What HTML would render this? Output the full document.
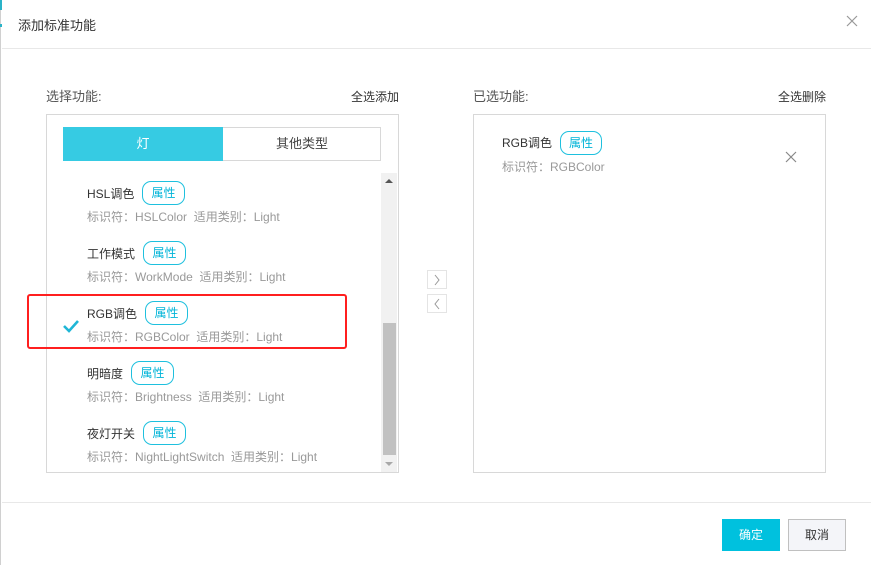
<!DOCTYPE html>
<html><head><meta charset="utf-8"><style>
*{margin:0;padding:0;box-sizing:border-box}
body{width:871px;height:565px;background:#fff;font-family:"Liberation Sans","Noto Sans CJK SC",sans-serif;position:relative;overflow:hidden;color:#333}
.a{position:absolute}
.t{font-size:12px;white-space:nowrap}
.pill{position:absolute;height:24px;border:1px solid #1ec0de;border-radius:9px;color:#00b4d8;font-size:12px;line-height:22px;text-align:center;width:43px}
.sub{color:#999;font-size:12px}
</style></head><body>
<div class="a" style="left:0;top:0;width:1px;height:565px;background:#d0d0d0"></div>
<div class="a" style="left:0;top:0;width:2px;height:10px;background:#2ab3c8"></div>
<div class="a" style="left:0;top:24px;width:2px;height:3px;background:#2ab3c8"></div>
<div class="a t" style="left:18px;top:15px;font-size:13px;color:#333">添加标准功能</div>
<svg class="a" style="left:846px;top:15px" width="12" height="12"><path d="M1 1L11 11M11 1L1 11" stroke="#999" stroke-width="1.2"/></svg>
<div class="a" style="left:2px;top:48px;width:869px;height:1px;background:#e8e8e8"></div>

<div class="a t" style="left:46px;top:86px;font-size:13px;color:#555">选择功能:</div>
<div class="a t" style="left:351px;top:88px;color:#333">全选添加</div>
<div class="a" style="left:46px;top:114px;width:353px;height:359px;border:1px solid #d8d8d8"></div>
<div class="a" style="left:63px;top:127px;width:318px;height:34px;border:1px solid #d8d8d8"></div>
<div class="a t" style="left:63px;top:127px;width:160px;height:34px;background:#36cbe3;color:#fff;line-height:34px;text-align:center;font-size:13px">灯</div>
<div class="a t" style="left:223px;top:127px;width:158px;height:34px;line-height:34px;text-align:center;font-size:13px;color:#444">其他类型</div>
<div class="a" style="left:381px;top:173px;width:16px;height:299px;background:#f1f1f1"></div>
<div class="a" style="left:383px;top:323px;width:13px;height:132px;background:#c1c1c1"></div>
<svg class="a" style="left:385px;top:178px" width="8" height="6"><path d="M0 5L4 1L8 5Z" fill="#555"/></svg>
<svg class="a" style="left:385px;top:461px" width="8" height="6"><path d="M0 1L8 1L4 5Z" fill="#a8a8a8"/></svg>

<div class="a t" style="left:87px;top:185px">HSL调色</div>
<div class="pill" style="left:142px;top:181px">属性</div>
<div class="a t sub" style="left:87px;top:208px">标识符：HSLColor &nbsp;适用类别：Light</div>
<div class="a t" style="left:87px;top:245px">工作模式</div>
<div class="pill" style="left:143px;top:241px">属性</div>
<div class="a t sub" style="left:87px;top:268px">标识符：WorkMode &nbsp;适用类别：Light</div>
<div class="a t" style="left:87px;top:305px">RGB调色</div>
<div class="pill" style="left:145px;top:301px">属性</div>
<div class="a t sub" style="left:87px;top:328px">标识符：RGBColor &nbsp;适用类别：Light</div>
<svg class="a" style="left:62px;top:319px" width="18" height="14"><path d="M2 7L7 12L16 2" stroke="#1fb6d6" stroke-width="2.6" fill="none"/></svg>
<div class="a" style="left:27px;top:294px;width:320px;height:55px;border:2.5px solid #ff1f1f;border-radius:3px"></div>
<div class="a t" style="left:87px;top:365px">明暗度</div>
<div class="pill" style="left:131px;top:361px">属性</div>
<div class="a t sub" style="left:87px;top:388px">标识符：Brightness &nbsp;适用类别：Light</div>
<div class="a t" style="left:87px;top:425px">夜灯开关</div>
<div class="pill" style="left:143px;top:421px">属性</div>
<div class="a t sub" style="left:87px;top:448px">标识符：NightLightSwitch &nbsp;适用类别：Light</div>

<div class="a" style="left:427px;top:270px;width:20px;height:19px;border:1px solid #e4e4e4"></div>
<svg class="a" style="left:433px;top:274px" width="8" height="12"><path d="M2 1L6 6L2 11" stroke="#999" fill="none"/></svg>
<div class="a" style="left:427px;top:294px;width:20px;height:19px;border:1px solid #e4e4e4"></div>
<svg class="a" style="left:433px;top:298px" width="8" height="12"><path d="M6 1L2 6L6 11" stroke="#999" fill="none"/></svg>

<div class="a t" style="left:473px;top:86px;font-size:13px;color:#555">已选功能:</div>
<div class="a t" style="left:778px;top:88px;color:#333">全选删除</div>
<div class="a" style="left:473px;top:114px;width:353px;height:359px;border:1px solid #d8d8d8"></div>
<div class="a t" style="left:502px;top:134px">RGB调色</div>
<div class="pill" style="left:560px;top:131px;width:42px">属性</div>
<div class="a t sub" style="left:502px;top:158px">标识符：RGBColor</div>
<svg class="a" style="left:785px;top:151px" width="12" height="12"><path d="M1 1L11 11M11 1L1 11" stroke="#888" stroke-width="1.2"/></svg>

<div class="a" style="left:2px;top:502px;width:869px;height:1px;background:#e8e8e8"></div>
<div class="a t" style="left:722px;top:519px;width:58px;height:32px;background:#00c1de;color:#fff;line-height:32px;text-align:center">确定</div>
<div class="a t" style="left:788px;top:519px;width:58px;height:32px;background:#f4f5f9;border:1px solid #c0c0c0;color:#333;line-height:30px;text-align:center">取消</div>
</body></html>
